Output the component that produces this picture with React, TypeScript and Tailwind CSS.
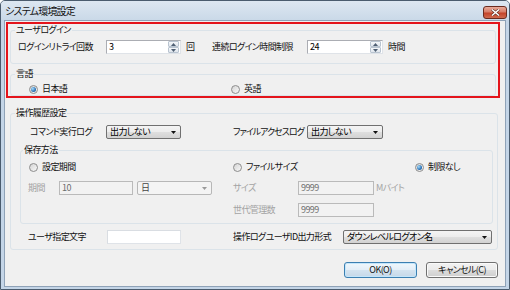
import React from "react"

function Radio({ checked = false }: { checked?: boolean }) {
    return (
        <span className="flex h-[9px] w-[9px] shrink-0 items-center justify-center rounded-full border border-[#8d8d8d] bg-[linear-gradient(135deg,#d4d4d4,#f8f8f8)]">
            {checked && (
                <span className="h-[5px] w-[5px] rounded-full bg-[radial-gradient(circle_at_35%_35%,#a6dcfb,#2d74b8_60%,#1a4c86)]" />
            )}
        </span>
    )
}

function Combo({ value, className = "", disabled = false }: { value: string; className?: string; disabled?: boolean }) {
    return (
        <div
            className={`flex h-[14px] shrink-0 items-center justify-between rounded-[2px] border pl-[3px] pr-[4px] ${disabled
                ? "border-[#b7b7b7] bg-[#f4f4f4] text-[#444]"
                : "border-[#707070] bg-[linear-gradient(#f4f4f4,#ececec_50%,#dfdfdf_50%,#d2d2d2)] text-black"
                } ${className}`}
        >
            <span className="whitespace-nowrap">{value}</span>
            <svg width="5" height="3" viewBox="0 0 5 3">
                <path d="M0 0h5L2.5 3z" fill={disabled ? "#9a9a9a" : "#111"} />
            </svg>
        </div>
    )
}

function SpinArrow({ up }: { up?: boolean }) {
    return (
        <div className="flex h-[6px] items-center justify-center rounded-[1px] border border-[#b9c4d0] bg-[linear-gradient(#f6f8fa,#dfe5ec)]">
            <svg width="5" height="3" viewBox="0 0 5 3">
                <path d={up ? "M0 3h5L2.5 0z" : "M0 0h5L2.5 3z"} fill="#4f5f73" />
            </svg>
        </div>
    )
}

function TextBox({ value = "", className = "", disabled = false, spin = false }: { value?: string; className?: string; disabled?: boolean; spin?: boolean }) {
    return (
        <div
            className={`flex h-[14px] shrink-0 items-center border ${disabled
                ? "border-[#bababa] bg-[#f2f2f2] text-[#6d6d6d]"
                : "border-[#abadb3] border-b-[#dfe3e8] border-r-[#dfe3e8] bg-white text-black"
                } ${className}`}
        >
            <span className="flex-1 pl-[2px]">{value}</span>
            {spin && (
                <div className="mr-[1px] flex w-[11px] flex-col">
                    <SpinArrow up />
                    <SpinArrow />
                </div>
            )}
        </div>
    )
}

function Btn({ label, primary = false }: { label: string; primary?: boolean }) {
    return (
        <div
            className={`flex h-[16px] items-center justify-center rounded-[3px] border ${primary
                ? "w-[73px] border-[#3c7fb1] bg-[linear-gradient(#f0f7fc,#e3eef7_50%,#d4e3f0_50%,#c6d8e8)] shadow-[inset_0_0_0_1px_#c4e6fb]"
                : "w-[72px] border-[#707070] bg-[linear-gradient(#f2f2f2,#ebebeb_50%,#dddddd_50%,#cfcfcf)] shadow-[inset_0_0_0_1px_#fafafa]"
                }`}
        >
            {label}
        </div>
    )
}

export default function App() {
    return (
        <div className="flex h-[290px] w-[510px] flex-col rounded-t-[5px] border border-[#4b5c6e] bg-[#c4d5e7] font-['Noto_Sans_CJK_JP',sans-serif] text-[9px] leading-[12px] tracking-[-0.6px] text-[#111] [font-feature-settings:'palt']">
            {/* title bar */}
            <div className="flex h-[19px] items-center justify-between rounded-t-[4px] bg-[linear-gradient(#dde7f1,#cad9e8)] pl-[4px]">
                <span className="text-[10px] tracking-[-0.8px]">システム環境設定</span>
                <div className="mr-[2px] mt-[3px] flex h-[13px] w-[24px] items-center justify-center rounded-[3px] border border-[#6b2c20] bg-[linear-gradient(#e9ab9a,#d77d68_45%,#c4442a_55%,#cf6a4f)]">
                    <svg width="9" height="7" viewBox="0 0 9 7">
                        <path d="M1 0.5L8 6.5M8 0.5L1 6.5" stroke="#5a2a20" strokeWidth="2.6" />
                        <path d="M1 0.5L8 6.5M8 0.5L1 6.5" stroke="#fff" strokeWidth="1.5" />
                    </svg>
                </div>
            </div>

            {/* client area */}
            <div className="mx-[3px] mb-[2px] flex flex-1 flex-col border border-[#8fa2b7] bg-[#f0f0f0]">
                {/* highlighted settings */}
                <div className="ml-[1px] mt-[1px] flex w-[494px] flex-col border-2 border-[#e4141b]">
                    <fieldset className="mx-[2px] rounded-[3px] border border-[#dbe3e9]">
                        <legend className="ml-[4px] px-[1px]">ユーザログイン</legend>
                        <div className="mb-[9px] mt-[4px] flex h-[14px] items-center">
                            <div className="flex w-[201px] items-center pl-[7px]">
                                <span className="w-[88px] whitespace-nowrap">ログインリトライ回数</span>
                                <TextBox value="3" spin className="w-[75px]" />
                                <span className="ml-[5px]">回</span>
                            </div>
                            <span className="w-[95px] whitespace-nowrap">連続ログイン時間制限</span>
                            <TextBox value="24" spin className="w-[76px]" />
                            <span className="ml-[5px]">時間</span>
                        </div>
                    </fieldset>
                    <fieldset className="mx-[2px] mt-[4px] rounded-[3px] border border-[#dbe3e9]">
                        <legend className="ml-[4px] px-[1px]">言語</legend>
                        <div className="mt-[3px] flex h-[12px] items-center">
                            <div className="flex w-[220px] items-center gap-[4px] pl-[18px]">
                                <Radio checked />
                                <span>日本語</span>
                            </div>
                            <div className="flex items-center gap-[4px]">
                                <Radio />
                                <span>英語</span>
                            </div>
                        </div>
                    </fieldset>
                </div>

                {/* operation history */}
                <fieldset className="ml-[5px] mr-[7px] mt-[9px] rounded-[3px] border border-[#dbe3e9]">
                    <legend className="ml-[4px] px-[1px]">操作履歴設定</legend>
                    <div className="flex flex-col pb-[5px] pt-[6px]">
                        <div className="flex h-[14px] items-center">
                            <div className="flex w-[222px] items-center pl-[19px]">
                                <span className="w-[76px] whitespace-nowrap">コマンド実行ログ</span>
                                <Combo value="出力しない" className="w-[75px]" />
                            </div>
                            <span className="w-[74px] whitespace-nowrap tracking-[-1px]">ファイルアクセスログ</span>
                            <Combo value="出力しない" className="w-[76px]" />
                        </div>

                        <fieldset className="ml-[9px] mr-[4px] mt-[5px] rounded-[3px] border border-[#dbe3e9]">
                            <legend className="ml-[2px] px-[1px]">保存方法</legend>
                            <div className="flex flex-col pb-[6px] pt-[5px]">
                                <div className="flex h-[12px] items-center">
                                    <div className="flex w-[212px] items-center gap-[4px] pl-[8px]">
                                        <Radio />
                                        <span>設定期間</span>
                                    </div>
                                    <div className="flex w-[182px] items-center gap-[4px]">
                                        <Radio />
                                        <span>ファイルサイズ</span>
                                    </div>
                                    <div className="flex items-center gap-[4px]">
                                        <Radio checked />
                                        <span>制限なし</span>
                                    </div>
                                </div>
                                <div className="mt-[8px] flex h-[14px] items-center">
                                    <div className="flex w-[212px] items-center pl-[7px]">
                                        <span className="w-[31px] text-[#a3a3a3]">期間</span>
                                        <TextBox value="10" disabled className="w-[74px]" />
                                        <Combo value="日" disabled className="ml-[4px] w-[75px]" />
                                    </div>
                                    <span className="w-[65px] text-[#a3a3a3]">サイズ</span>
                                    <TextBox value="9999" disabled className="w-[76px]" />
                                    <span className="ml-[2px] text-[#a3a3a3]">Mバイト</span>
                                </div>
                                <div className="mt-[8px] flex h-[14px] items-center">
                                    <div className="w-[212px]" />
                                    <span className="w-[65px] text-[#a3a3a3]">世代管理数</span>
                                    <TextBox value="9999" disabled className="w-[76px]" />
                                </div>
                            </div>
                        </fieldset>

                        <div className="mt-[6px] flex h-[14px] items-center">
                            <div className="flex w-[222px] items-center pl-[17px]">
                                <span className="w-[79px] whitespace-nowrap">ユーザ指定文字</span>
                                <TextBox className="w-[74px] border-[#d9dde2]" />
                            </div>
                            <span className="w-[110px] whitespace-nowrap">操作ログユーザID出力形式</span>
                            <Combo value="ダウンレベルログオン名" className="w-[149px]" />
                        </div>
                    </div>
                </fieldset>

                {/* dialog buttons */}
                <div className="mt-[12px] flex justify-end gap-[9px] pr-[7px]">
                    <Btn label="OK(O)" primary />
                    <Btn label="キャンセル(C)" />
                </div>
            </div>
        </div>
    )
}
